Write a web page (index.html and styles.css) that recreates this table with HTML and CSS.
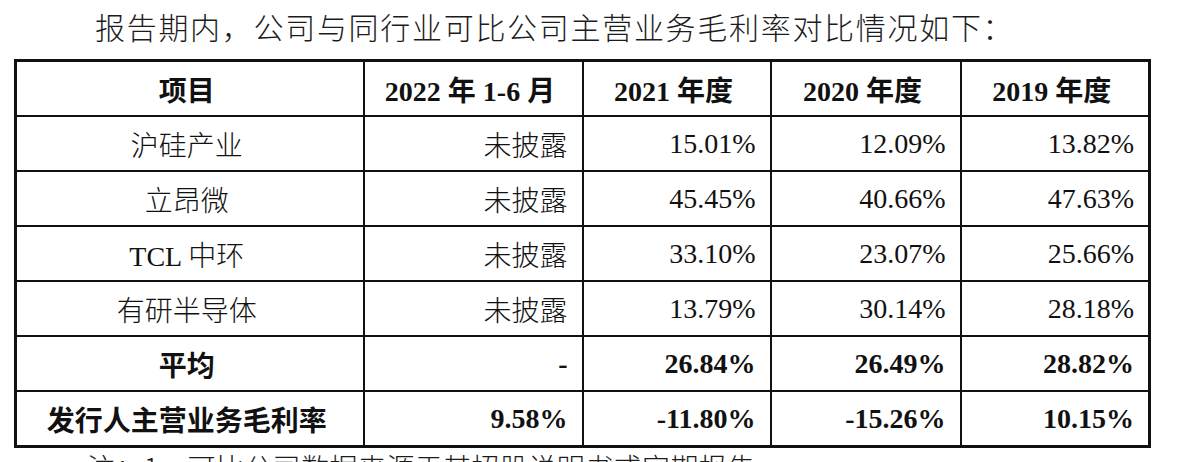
FILE: index.html
```html
<!DOCTYPE html>
<html lang="zh-CN">
<head>
<meta charset="utf-8">
<title>毛利率对比</title>
<link rel="stylesheet" href="styles.css">
</head>
<body>
<div class="page">
  <p class="intro">报告期内，公司与同行业可比公司主营业务毛利率对比情况如下：</p>
  <table class="cmp">
    <colgroup>
      <col class="c-name">
      <col class="c-2022">
      <col class="c-2021">
      <col class="c-2020">
      <col class="c-2019">
    </colgroup>
    <thead>
      <tr>
        <th>项目</th>
        <th>2022 年 1-6 月</th>
        <th>2021 年度</th>
        <th>2020 年度</th>
        <th>2019 年度</th>
      </tr>
    </thead>
    <tbody>
      <tr><td class="name">沪硅产业</td><td>未披露</td><td>15.01%</td><td>12.09%</td><td>13.82%</td></tr>
      <tr><td class="name">立昂微</td><td>未披露</td><td>45.45%</td><td>40.66%</td><td>47.63%</td></tr>
      <tr><td class="name">TCL 中环</td><td>未披露</td><td>33.10%</td><td>23.07%</td><td>25.66%</td></tr>
      <tr><td class="name">有研半导体</td><td>未披露</td><td>13.79%</td><td>30.14%</td><td>28.18%</td></tr>
      <tr class="bold"><td class="name">平均</td><td>-</td><td>26.84%</td><td>26.49%</td><td>28.82%</td></tr>
      <tr class="bold"><td class="name">发行人主营业务毛利率</td><td>9.58%</td><td>-11.80%</td><td>-15.26%</td><td>10.15%</td></tr>
    </tbody>
  </table>
  <p class="note">注：1、可比公司数据来源于其招股说明书或定期报告</p>
</div>
</body>
</html>
```

FILE: styles.css
```css
html, body {
  margin: 0;
  padding: 0;
  background: #ffffff;
}

.page {
  width: 1182px;
  height: 462px;
  overflow: hidden;
  font-family: "Liberation Serif", "Noto Sans CJK SC", serif;
  color: #111111;
}

.intro {
  margin: 0;
  padding: 9px 0 0 95px;
  height: 50px;
  font-family: "Noto Sans CJK SC", sans-serif;
  font-weight: 300;
  font-size: 30px;
  line-height: 34px;
  letter-spacing: 1.7px;
  color: #1c1c1c;
}

.cmp {
  margin-left: 14px;
  border-collapse: collapse;
  table-layout: fixed;
  width: 1137px;
  border: 3px solid #111111;
}

.c-name { width: 348px; }
.c-2022 { width: 219px; }
.c-2021 { width: 188px; }
.c-2020 { width: 190px; }
.c-2019 { width: 189px; }

.cmp th,
.cmp td {
  border: 2px solid #111111;
  padding: 0 14px 0 8px;
  font-size: 28px;
  white-space: nowrap;
  font-family: "Liberation Serif", "Noto Sans CJK SC", serif;
}

.cmp th {
  height: 53px;
  text-align: center;
  font-weight: 700;
}

.cmp td {
  height: 53px;
  text-align: right;
  font-weight: 300;
}

.cmp td.name {
  text-align: center;
}

.cmp tr.bold td {
  font-weight: 700;
}

.cmp tr.bold td.name {
  font-family: "Noto Sans CJK SC", sans-serif;
}

.note {
  margin: 2px 0 0 0;
  padding-left: 87px;
  font-family: "Noto Sans CJK SC", sans-serif;
  font-weight: 300;
  font-size: 28px;
  line-height: 34px;
  letter-spacing: 0.4px;
  color: #1c1c1c;
}
```
